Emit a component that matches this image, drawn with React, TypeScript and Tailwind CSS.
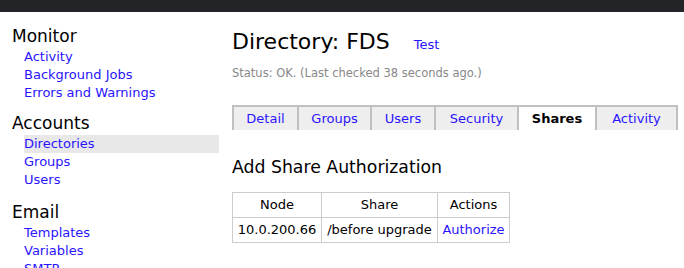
import React from 'react';

const sideNav = [
  { title: 'Monitor', links: ['Activity', 'Background Jobs', 'Errors and Warnings'] },
  { title: 'Accounts', links: ['Directories', 'Groups', 'Users'] },
  { title: 'Email', links: ['Templates', 'Variables', 'SMTP'] },
];

const tabs = ['Detail', 'Groups', 'Users', 'Security', 'Shares', 'Activity'];

export default function App() {
  return (
    <div className="h-[268px] overflow-hidden bg-white text-black" style={{ fontFamily: '"DejaVu Sans", Verdana, sans-serif' }}>
      <div className="h-[12px] bg-[#232427]" />

      <div className="flex">
        {/* Sidebar */}
        <div className="w-[219px] shrink-0 pl-[12px] pt-[13px]">
          {sideNav.map((section, i) => (
            <div key={section.title} className={i === 0 ? 'mb-[10px]' : 'mb-[12px]'}>
              <div className="text-[17px] leading-[22px]">{section.title}</div>
              <ul className="mt-[1px]">
                {section.links.map((link) => (
                  <li
                    key={link}
                    className={`ml-[12px] pl-0 text-[13px] leading-[18px] text-[#2a14ff] ${
                      link === 'Directories' ? 'bg-[#e8e8e8]' : ''
                    }`}
                  >
                    {link}
                  </li>
                ))}
              </ul>
            </div>
          ))}
        </div>

        {/* Main */}
        <div className="flex-1 pl-[13px] pt-[15px]">
          <div className="flex items-baseline">
            <h1 className="text-[22px] leading-[30px]">Directory: FDS</h1>
            <a className="ml-[24px] text-[13px] text-[#2a14ff]">Test</a>
          </div>
          <p className="mt-[8px] text-[11.5px] leading-[16px] text-[#888888]">
            Status: OK. (Last checked 38 seconds ago.)
          </p>

          <div className="mt-[24px] flex">
            {tabs.map((tab, i) => (
              <div
                key={tab}
                className={`flex h-[25px] items-center justify-center border-t-2 border-l-2 border-[#c0c0c0] text-[13px] ${
                  i === tabs.length - 1 ? 'border-r-2' : ''
                } ${
                  tab === 'Shares'
                    ? 'bg-white font-bold text-black'
                    : 'bg-[#eeeeee] text-[#2a14ff]'
                } ${
                  ['w-[65px]', 'w-[73px]', 'w-[64px]', 'w-[83px]', 'w-[78px]', 'w-[83px]'][i]
                }`}
              >
                {tab}
              </div>
            ))}
          </div>

          <h2 className="mt-[26px] text-[17.3px] leading-[22px]">Add Share Authorization</h2>

          <table className="mt-[14px] border-collapse text-[13px]">
            <thead>
              <tr>
                <th className="h-[25px] w-[89px] border border-[#cccccc] p-0 font-normal">Node</th>
                <th className="h-[25px] w-[116px] border border-[#cccccc] p-0 font-normal">Share</th>
                <th className="h-[25px] w-[72px] border border-[#cccccc] p-0 font-normal">Actions</th>
              </tr>
            </thead>
            <tbody>
              <tr>
                <td className="h-[25px] border border-[#cccccc] px-[4px] text-center">10.0.200.66</td>
                <td className="h-[25px] border border-[#cccccc] px-[4px] text-center">/before upgrade</td>
                <td className="h-[25px] border border-[#cccccc] px-[4px] text-center text-[#2a14ff]">Authorize</td>
              </tr>
            </tbody>
          </table>
        </div>
      </div>
    </div>
  );
}
